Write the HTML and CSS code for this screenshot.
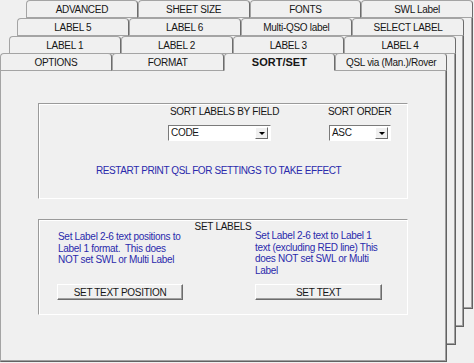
FILE: index.html
```html
<!DOCTYPE html>
<html lang="en">
<head>
    <meta charset="UTF-8">
    <meta name="viewport" content="width=device-width, initial-scale=1.0">
    <title>Print QSL - Sort/Set</title>
    <link rel="stylesheet" href="styles.css">
</head>
<body>
    <div class="desk">
        <!-- back rows of the tab strip, each one a page peeking out -->
        <div class="layer layer-1">
            <div class="tabs">
                <div class="tab">ADVANCED</div>
                <div class="tab">SHEET SIZE</div>
                <div class="tab">FONTS</div>
                <div class="tab">SWL Label</div>
            </div>
            <div class="page"></div>
        </div>

        <div class="layer layer-2">
            <div class="tabs">
                <div class="tab">LABEL 5</div>
                <div class="tab">LABEL 6</div>
                <div class="tab">Multi-QSO label</div>
                <div class="tab">SELECT LABEL</div>
            </div>
            <div class="page"></div>
        </div>

        <div class="layer layer-3">
            <div class="tabs">
                <div class="tab">LABEL 1</div>
                <div class="tab">LABEL 2</div>
                <div class="tab">LABEL 3</div>
                <div class="tab">LABEL 4</div>
            </div>
            <div class="page"></div>
        </div>

        <div class="layer layer-4">
            <div class="tabs">
                <div class="tab">OPTIONS</div>
                <div class="tab">FORMAT</div>
                <div class="tab active">SORT/SET</div>
                <div class="tab">QSL via (Man.)/Rover</div>
            </div>
            <div class="page front">
                <div class="group sort-group">
                    <div class="sort-fields">
                        <div class="field field-by">
                            <div class="field-label">SORT LABELS BY FIELD</div>
                            <div class="combo combo-by">
                                <span class="combo-value">CODE</span>
                                <span class="combo-btn"><span class="arrow"></span></span>
                            </div>
                        </div>
                        <div class="field field-order">
                            <div class="field-label">SORT ORDER</div>
                            <div class="combo combo-order">
                                <span class="combo-value">ASC</span>
                                <span class="combo-btn"><span class="arrow"></span></span>
                            </div>
                        </div>
                    </div>
                    <p class="notice">RESTART PRINT QSL FOR SETTINGS TO TAKE EFFECT</p>
                </div>

                <div class="group set-group">
                    <div class="group-title">SET LABELS</div>
                    <div class="set-cols">
                        <p class="note note-left">Set Label 2-6 text positions to<br>Label 1 format.&nbsp; This does<br>NOT set SWL or Multi Label</p>
                        <p class="note">Set Label 2-6 text to Label 1<br>text (excluding RED line) This<br>does NOT set SWL or Multi<br>Label</p>
                        <button class="btn">SET TEXT POSITION</button>
                        <button class="btn">SET TEXT</button>
                    </div>
                </div>
            </div>
        </div>
    </div>
</body>
</html>
```

FILE: styles.css
```css
body {
    margin: 0;
    padding: 0;
    background-color: #f0f0f0;
    font-family: "Liberation Sans", Arial, sans-serif;
    font-size: 10px;
    letter-spacing: -0.3px;
    color: #161616;
}

.desk {
    position: relative;
    width: 474px;
    height: 363px;
    overflow: hidden;
}

/* stacked tab pages */
.layer {
    position: absolute;
    width: 447px;
    display: flex;
    flex-direction: column;
}

.layer-1 { left: 26px; top: 0; }
.layer-2 { left: 17px; top: 18px; }
.layer-3 { left: 9px; top: 36px; }
.layer-4 { left: 0; top: 53px; }

.tabs {
    display: flex;
    height: 18px;
}

.tab {
    flex: 1;
    box-sizing: border-box;
    height: 18px;
    padding-top: 2px;
    line-height: 13px;
    text-align: center;
    white-space: nowrap;
    background-color: #f0f0f0;
    border: 1px solid #a4a4a4;
    border-right-color: #6c6c6c;
    border-radius: 4px 4px 0 0;
}

.tab.active {
    border-bottom-color: #f0f0f0;
    font-size: 11px;
    font-weight: bold;
    letter-spacing: 0;
}

.page {
    box-sizing: border-box;
    height: 291px;
    background-color: #f0f0f0;
    border-left: 1px solid #a4a4a4;
    border-right: 1px solid #626262;
    border-bottom: 1px solid #626262;
    box-shadow: inset -1px -1px 0 #a0a0a0;
}

.front {
    padding: 32px 0 0 37px;
}

/* etched group boxes */
.group {
    box-sizing: border-box;
    width: 370px;
    height: 96px;
    border: 1px solid #ffffff;
    border-top-color: #9a9a9a;
    border-left-color: #9a9a9a;
    box-shadow: inset 1px 1px 0 #ffffff;
}

.sort-group {
    padding-top: 2px;
}

.sort-fields {
    display: flex;
    padding-left: 129px;
    gap: 52px;
}

.field-by {
    width: 108px;
}

.field-label {
    line-height: 12px;
    white-space: nowrap;
    padding-left: 2px;
}

.field-order .field-label {
    padding-left: 0;
}

.combo {
    box-sizing: border-box;
    height: 16px;
    margin-top: 7px;
    display: flex;
    align-items: center;
    justify-content: space-between;
    background-color: #ffffff;
    border: 1px solid #ffffff;
    border-top-color: #7a7a7a;
    border-left-color: #7a7a7a;
}

.combo-by {
    width: 103px;
}

.combo-order {
    width: 62px;
    margin-left: 1px;
}

.combo-value {
    padding-left: 2px;
    line-height: 14px;
}

.combo-btn {
    box-sizing: border-box;
    width: 13px;
    height: 12px;
    margin-right: 2px;
    display: flex;
    align-items: center;
    justify-content: center;
    background-color: #f0f0f0;
    border: 1px solid #6c6c6c;
    border-top-color: #ffffff;
    border-left-color: #ffffff;
}

.arrow {
    width: 0;
    height: 0;
    border-left: 3px solid transparent;
    border-right: 3px solid transparent;
    border-top: 3px solid #000000;
}

.notice {
    margin: 23px 0 0 57px;
    line-height: 13px;
    letter-spacing: -0.4px;
    color: #2a2aac;
}

.set-group {
    margin-top: 20px;
    padding-top: 1px;
}

.group-title {
    text-align: center;
    line-height: 11px;
    margin-bottom: -2px;
}

.set-cols {
    display: grid;
    grid-template-columns: 126px 127px;
    grid-template-rows: 54px 16px;
    column-gap: 72px;
    padding-left: 18px;
}

.note {
    margin: 0;
    line-height: 11.5px;
    color: #2a2aac;
    white-space: nowrap;
}

.note-left {
    margin-top: 1px;
    padding-left: 1px;
}

.btn {
    box-sizing: border-box;
    height: 16px;
    padding: 0;
    font-family: inherit;
    font-size: 10px;
    letter-spacing: -0.3px;
    line-height: 13px;
    color: #161616;
    background-color: #f0f0f0;
    border: 1px solid #6c6c6c;
    border-top-color: #ffffff;
    border-left-color: #ffffff;
    box-shadow: inset -1px -1px 0 #a0a0a0;
}
```
